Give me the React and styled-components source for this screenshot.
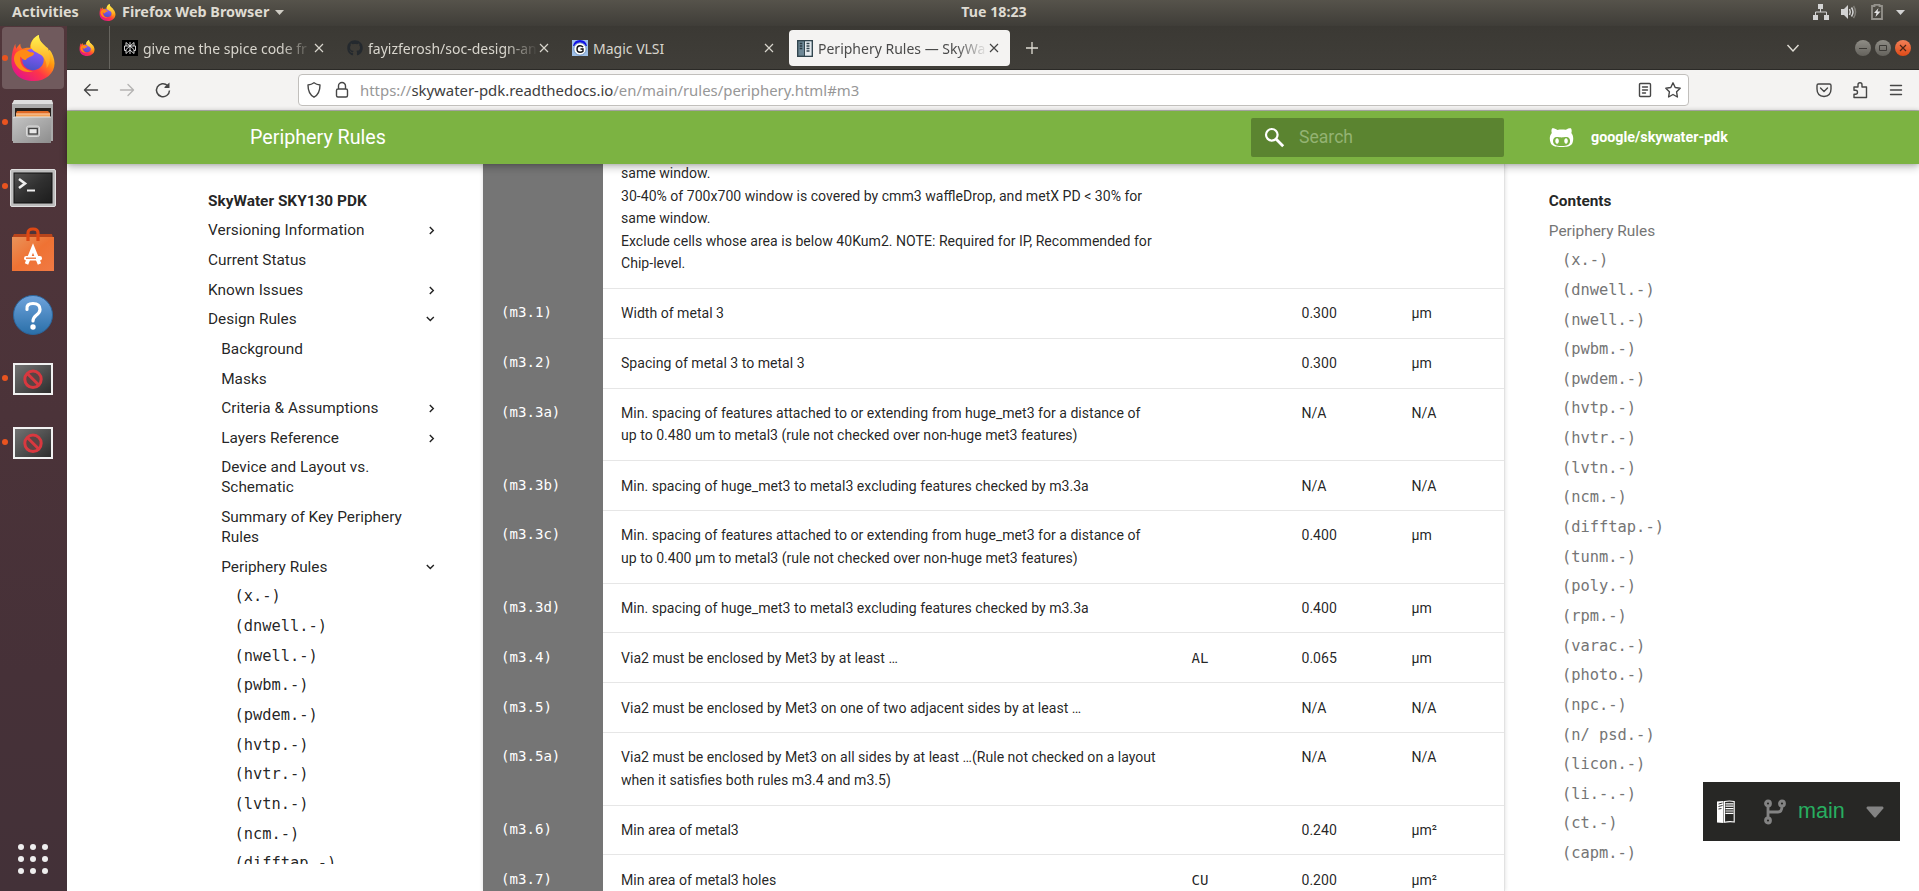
import React from 'react';
import styled, { createGlobalStyle, css } from 'styled-components';
import { FaGithub, FaGithubAlt } from 'react-icons/fa';

const UI = '"Noto Sans", "Open Sans", sans-serif';
const MONO = '"DejaVu Sans Mono", monospace';

const Global = createGlobalStyle`
  * { box-sizing: border-box; }
  body { margin: 0; overflow: hidden; background: #fff; font-family: Roboto, sans-serif; }
  svg { display: block; flex: none; }
`;

const Screen = styled.div`
  width: 1919px;
  height: 891px;
  display: flex;
  flex-direction: column;
  overflow: hidden;
`;

/* ---------- desktop top bar ---------- */
const TopBar = styled.div`
  flex: none;
  height: 26px;
  padding: 0 13px 2px 12px;
  display: grid;
  grid-template-columns: 1fr auto 1fr;
  align-items: center;
  background: linear-gradient(#56534b, #3f3d38);
  color: #dfdbd2;
  font: bold 14.4px/24px ${UI};
`;
const TopGroup = styled.div`
  display: flex;
  align-items: center;
  height: 24px;
  justify-content: ${(p) => (p.$end ? 'flex-end' : 'flex-start')};
`;
const Activities = styled.span`
  width: 87px;
`;
const AppName = styled.span`
  margin: 0 6px 0 6px;
`;
const Clock = styled.span`
  font-size: 14.2px;
  position: relative;
  left: 35px;
`;
const StatusGap = styled.span`
  width: ${(p) => p.$w}px;
`;

const Below = styled.div`
  flex: 1;
  min-height: 0;
  display: flex;
`;

/* ---------- dock ---------- */
const Dock = styled.div`
  flex: none;
  width: 67px;
  display: flex;
  flex-direction: column;
  background: linear-gradient(#51363b, #4b3339 45%, #463138 75%, #433138);
`;
const DockItem = styled.div`
  position: relative;
  height: 64px;
  padding-right: 1px;
  display: flex;
  align-items: center;
  justify-content: center;
`;
const DockTile = styled.div`
  width: 62px;
  height: 62px;
  display: flex;
  align-items: center;
  justify-content: center;
  padding-top: ${(p) => p.$drop || 0}px;
  border-radius: 4px;
  background: ${(p) => (p.$active ? '#705a5d' : 'transparent')};
`;
const RunDot = styled.i`
  position: absolute;
  left: 2px;
  top: 29px;
  width: 6px;
  height: 6px;
  border-radius: 50%;
  background: #e95420;
`;
const DockSpacer = styled.div`
  flex: 1;
`;
const AppGrid = styled.div`
  display: grid;
  grid-template-columns: repeat(3, 6px);
  gap: 6px;
  margin: 0 0 17px 18px;
  & > i {
    width: 6px;
    height: 6px;
    border-radius: 50%;
    background: #eee;
  }
`;

/* ---------- browser chrome ---------- */
const Browser = styled.div`
  flex: 1;
  min-width: 0;
  display: flex;
  flex-direction: column;
`;
const TabBar = styled.div`
  flex: none;
  height: 44px;
  display: flex;
  align-items: center;
  background: linear-gradient(#3b3934, #403e39);
  border-bottom: 1px solid #2b2a27;
  padding-right: 8px;
`;
const PinnedTab = styled.div`
  width: 43px;
  height: 43px;
  padding-left: 12px;
  display: flex;
  align-items: center;
  border-right: 1px solid #66645e;
  margin-right: 4px;
`;
const Tab = styled.div`
  width: 221px;
  height: 36px;
  margin: 1px 4px 0 0;
  padding: 0 10px 0 8px;
  display: flex;
  align-items: center;
  border-radius: 4px;
  font: 14px/20px ${UI};
  color: #d8d5cd;
  ${(p) => p.$active && css`
    background: #f4f3f2;
    color: #4a4a4a;
  `}
`;
const TabTitle = styled.span`
  flex: 1;
  min-width: 0;
  margin-left: 5px;
  padding-top: 1px;
  overflow: hidden;
  white-space: nowrap;
  ${(p) => p.$fade && css`
    mask-image: linear-gradient(to right, #000 calc(100% - 32px), transparent 100%);
  `}
`;
const TabControls = styled.div`
  flex: 1;
  display: flex;
  align-items: center;
  padding-left: 12px;
`;
const WinButtons = styled.div`
  display: flex;
  gap: 4px;
  margin-left: 55px;
`;
const WinButton = styled.div`
  width: 16px;
  height: 16px;
  border-radius: 50%;
  background: ${(p) => (p.$close ? 'linear-gradient(#f28058, #df4a16)' : 'linear-gradient(#8f8d86, #64625c)')};
`;
const Push = styled.div`
  flex: 1;
`;

const NavBar = styled.div`
  flex: none;
  height: 41px;
  display: flex;
  align-items: center;
  background: #f4f3f2;
  border-bottom: 1px solid #bab8b5;
  padding: 0 14px 0 15px;
`;
const NavButtons = styled.div`
  display: flex;
  gap: 18px;
  width: 216px;
`;
const UrlBox = styled.div`
  width: 1391px;
  height: 32px;
  display: flex;
  align-items: center;
  padding: 0 6px;
  border: 1px solid #c1bfbc;
  border-radius: 4px;
  background: #fff;
`;
const Url = styled.span`
  margin-left: 9px;
  padding-bottom: 1px;
  font: 14.92px/22px ${UI};
  color: #979797;
  & > b {
    font-weight: 400;
    color: #3d3d3d;
  }
`;
const NavIcons = styled.div`
  display: flex;
  gap: ${(p) => p.$gap}px;
  margin-left: auto;
`;

/* ---------- documentation page ---------- */
const Header = styled.header`
  flex: none;
  position: relative;
  z-index: 2;
  height: 53px;
  display: flex;
  align-items: center;
  padding-left: 183px;
  background: #7cb342;
  color: #fff;
  box-shadow: 0 0 5px rgba(0, 0, 0, 0.22), 0 4px 8px rgba(0, 0, 0, 0.2);
`;
const HeaderTitle = styled.div`
  width: 1001px;
  font-size: 19.7px;
  line-height: 26px;
`;
const SearchBox = styled.div`
  width: 253px;
  height: 39px;
  margin-bottom: 1px;
  padding-left: 13px;
  display: flex;
  align-items: center;
  gap: 14px;
  border-radius: 2px;
  background: #5b8430;
  color: #94b373;
  font-size: 17.6px;
`;
const RepoLink = styled.div`
  display: flex;
  align-items: center;
  gap: 17px;
  margin: 0 0 1px 45px;
  font-size: 14.3px;
  font-weight: 700;
`;

const Main = styled.main`
  flex: 1;
  min-height: 0;
  display: flex;
  background: #fff;
  color: rgba(0, 0, 0, 0.87);
`;
const Sidebar = styled.nav`
  flex: none;
  width: 416px;
  height: 700px;
  overflow: hidden;
  padding: 26.7px 47px 0 141px;
`;
const NavHeading = styled.div`
  height: 29.65px;
  line-height: 20px;
  font-size: 15.4px;
  font-weight: 700;
  white-space: nowrap;
`;
const NavItem = styled.div`
  display: flex;
  align-items: center;
  justify-content: space-between;
  margin-bottom: 9.65px;
  padding-left: ${(p) => p.$level * 13.2}px;
  white-space: pre;
  font-size: 15.4px;
  line-height: 20px;
  color: ${(p) => (p.$muted ? '#757575' : 'inherit')};
  ${(p) => p.$code && css`
    font-family: ${MONO};
    font-size: 15.4px;
  `}
`;
const Article = styled.section`
  flex: none;
  width: 1022px;
  overflow: hidden;
  border-right: 1px solid #e2e2e2;
  box-shadow: 0 0 4px rgba(0, 0, 0, 0.14);
`;
const Row = styled.div`
  display: grid;
  grid-template-columns: 120px 570.5px 110px 110px 1fr;
  height: ${(p) => p.$h}px;
  font-size: 14.08px;
  line-height: 22.5px;
`;
const Cell = styled.div`
  padding: 13.4px 0 0 18px;
  white-space: pre;
  border-bottom: 1px solid #e6e6e6;
`;
const CodeCell = styled.div`
  padding: 12.4px 0 0 18px;
  background: #757575;
  color: #fff;
  font-family: ${MONO};
  font-size: 14.08px;
`;
const FlagCell = styled(Cell)`
  font-family: ${MONO};
  font-size: 14.08px;
`;
const TailCell = styled(Cell)`
  display: flex;
  align-items: flex-end;
  padding-bottom: 13.4px;
  padding-top: 0;
  overflow: hidden;
`;
const Contents = styled.aside`
  flex: 1;
  padding: 27px 0 0 43.8px;
`;

const VersionBox = styled.div`
  position: fixed;
  left: 1703px;
  top: 782px;
  width: 197px;
  height: 59px;
  padding: 0 16px 0 14px;
  display: flex;
  align-items: center;
  background: #272725;
  color: #27ae60;
  font: 21.6px/30px "Liberation Sans", sans-serif;
`;
const Branch = styled.span`
  width: 68px;
  margin-left: 12px;
  padding-bottom: 2px;
`;

/* ---------- drawings ---------- */
function FirefoxLogo({ size }) {
  const id = 'ff' + size;
  return (
    <svg width={size} height={size} viewBox="0 0 46 47">
      <defs>
        <linearGradient id={id + 'a'} x1=".85" y1=".1" x2=".2" y2=".95">
          <stop offset="0" stopColor="#fff44f" />
          <stop offset=".35" stopColor="#ff980e" />
          <stop offset=".65" stopColor="#ff3647" />
          <stop offset="1" stopColor="#e31587" />
        </linearGradient>
        <linearGradient id={id + 'b'} x1=".6" y1="0" x2=".4" y2="1">
          <stop offset="0" stopColor="#9059ff" />
          <stop offset="1" stopColor="#4b52c8" />
        </linearGradient>
        <linearGradient id={id + 'c'} x1=".6" y1="0" x2=".6" y2="1">
          <stop offset="0" stopColor="#fff44f" />
          <stop offset="1" stopColor="#ff9a1e" />
        </linearGradient>
      </defs>
      <path d="M5 9c0 2 .2 3 1 5 1-2 2-3 4-5 0 3 1 4 2 5 3-1 6-1 8-1 0-6 4-11 9-13 0 6 3 8 7 12 2 1 3 2 3 4l1-1c3 4 5 9 5 14 0 10-9 18-21 18C10 47 1 39 1 27 1 19 3 13 5 9z" fill={`url(#${id}a)`} />
      <circle cx="23" cy="25" r="11" fill={`url(#${id}b)`} />
      <path d="M29 0c0 6 3 8 7 12 5 5 6 16 1 22 0-5-1-9-5-13-4-3-9-4-11-8-1-5 3-11 8-13z" fill={`url(#${id}c)`} />
      <path d="M7 17c5-3 9-2 12 0 2 1 5 0 5 2 0 3-6 3-8 6-2 2-5-2-6-3-1 7 4 15 13 15-9 3-17-3-19-10-1-4 0-8 3-10z" fill="#ff8a16" />
    </svg>
  );
}
const FilesIcon = () => (
  <svg width="44" height="46" viewBox="0 0 44 46">
    <defs>
      <linearGradient id="cab" x1="0" y1="0" x2="1" y2="1"><stop stopColor="#c4c4c4" /><stop offset="1" stopColor="#8d8d8d" /></linearGradient>
    </defs>
    <path d="M2 4l2-3h36l2 3v38H1V4z" fill="#aaa" />
    <path d="M3 1h38l1 4H1z" fill="#dedede" />
    <path d="M4 9h36v10H4z" fill="#26201c" />
    <path d="M5 14l1-2h31l2 2v5H5z" fill="#e06a26" />
    <path d="M5 15.500h34V19H5z" fill="#f3a156" />
    <path d="M5 15h34" stroke="#ffe0bd" />
    <path d="M2 19l2-1h36v26H2z" fill="url(#cab)" />
    <path d="M2 19l2-1h36" stroke="#e4e4e4" fill="none" />
    <rect x="15.500" y="27" width="13" height="10.500" rx="2" fill="#bcbcbc" stroke="#dadada" />
    <rect x="17.800" y="29.500" width="8.500" height="5.500" fill="#e8e8e8" stroke="#444" strokeWidth="1.300" />
  </svg>
);
const TerminalIcon = () => (
  <svg width="46" height="38" viewBox="0 0 46 38">
    <defs><linearGradient id="trm" x1="0" y1="0" x2="1" y2="1"><stop stopColor="#525252" /><stop offset=".5" stopColor="#303030" /><stop offset="1" stopColor="#1c1c1c" /></linearGradient></defs>
    <rect x=".5" y=".5" width="45" height="37" rx="1.500" fill="#bdbdbd" stroke="#e0e0e0" />
    <rect x="4" y="4" width="38" height="30" fill="url(#trm)" stroke="#111" />
    <path d="M9 10l6 4.500-6 4.500" fill="none" stroke="#eee" strokeWidth="2.600" />
    <path d="M17 21.500h8" stroke="#eee" strokeWidth="2" />
  </svg>
);
const SoftwareIcon = () => (
  <svg width="44" height="46" viewBox="0 0 44 46">
    <defs><linearGradient id="bag" x1="0" y1="0" x2="1" y2="1"><stop stopColor="#e9935a" /><stop offset=".5" stopColor="#ef7233" /><stop offset="1" stopColor="#f07a45" /></linearGradient></defs>
    <path d="M3 7h38l1 4H1z" fill="#b8451c" />
    <path d="M1 10h42v34H1z" fill="url(#bag)" />
    <path d="M17 14V6q0-4 5-4t5 4v8" fill="none" stroke="#dd4814" strokeWidth="3.200" />
    <path d="M15.500 37L22 21l6.500 16" fill="none" stroke="#fff" strokeWidth="3.600" />
    <rect x="13" y="29" width="18" height="4.500" rx="2.200" fill="#fff" />
    <path d="M15 31.200h10" stroke="#ef7233" strokeWidth="1.300" />
  </svg>
);
const HelpIcon = () => (
  <svg width="42" height="42" viewBox="0 0 42 42">
    <defs><linearGradient id="hlp" x1="0" y1="0" x2="0" y2="1"><stop stopColor="#6ea3dc" /><stop offset="1" stopColor="#2a6fa8" /></linearGradient></defs>
    <circle cx="21" cy="21" r="19.500" fill="url(#hlp)" stroke="#2b659c" />
    <path d="M15 15.500q-1-6 6-6 7 0 7 6 0 3-4 6-3 2.500-3 5.500" fill="none" stroke="#fff" strokeWidth="3.200" strokeLinecap="round" />
    <circle cx="21" cy="33" r="2.700" fill="#fff" />
  </svg>
);
const BlockedIcon = () => (
  <svg width="40" height="32" viewBox="0 0 40 32">
    <defs><linearGradient id="blk" x1="0" y1="0" x2="1" y2="1"><stop stopColor="#747474" /><stop offset="1" stopColor="#2b2b2b" /></linearGradient></defs>
    <rect x="1" y="1" width="38" height="30" fill="url(#blk)" stroke="#f1f1f1" strokeWidth="2" />
    <circle cx="20" cy="16.300" r="8.200" fill="#5a4444" stroke="#d8383f" strokeWidth="3" />
    <path d="M14.500 10.800l11 11" stroke="#d8383f" strokeWidth="3" />
  </svg>
);
const Close = ({ color }) => (
  <svg width="12" height="12" viewBox="0 0 12 12"><path d="M2 2l8 8M10 2l-8 8" stroke={color} strokeWidth="1.200" /></svg>
);
const AsteriskIcon = () => (
  <svg width="16" height="16" viewBox="0 0 16 16">
    <rect width="16" height="16" fill="#000" />
    <path d="M8 2v12M4 2.500L8 6l4-3.500V6M4 2.500V6M2.500 6h11v4.500H12M2.500 6v4.500H4M8 6L4 9.500v4L8 10l4 3.500v-4L8 6" fill="none" stroke="#e8e8e8" strokeWidth=".9" />
  </svg>
);
const MagicIcon = () => (
  <svg width="16" height="16" viewBox="0 0 16 16">
    <rect width="16" height="16" fill="#9fc0e8" />
    <path d="M1 6Q2 0 8 0t7 6z" fill="#1111e8" />
    <circle cx="8" cy="9" r="6.200" fill="#fff" stroke="#6a8fbe" />
    <path d="M11 7.200Q10 5.800 8 5.800q-3 0-3 3.200t3 3.200q2 0 3-1V9H8.500" fill="none" stroke="#111" strokeWidth="1.400" />
  </svg>
);
const DocsIcon = () => (
  <svg width="16" height="17" viewBox="0 0 16 17">
    <rect x=".7" y=".7" width="14.600" height="15.600" fill="#6d8795" stroke="#33464f" strokeWidth="1.400" />
    <rect x="7.500" y="1.400" width="7" height="14.200" fill="#e4eaee" />
    <path d="M7.500 1v15" stroke="#33464f" strokeWidth="1" />
    <path d="M2.700 3.500h2.600M2.700 6h2.600M2.700 8.500h2.600" stroke="#2a3b44" strokeWidth="1.300" />
    <path d="M9.500 3.500h3M9.500 6h3M9.500 8.500h3M9.500 11h3" stroke="#33464f" strokeWidth="1.300" />
  </svg>
);
const Line = ({ d, size = 18, color = '#464646', w = 1.4 }) => (
  <svg width={size} height={size} viewBox="0 0 18 18" fill="none" stroke={color} strokeWidth={w} strokeLinecap="round" strokeLinejoin="round"><path d={d} /></svg>
);
const Chevron = ({ open }) => (
  <svg width="10" height="10" viewBox="0 0 10 10" fill="none" stroke="#222" strokeWidth="1.400">
    <path d={open ? 'M.8 3l3.500 3.500L7.800 3' : 'M3.800 2l3.500 3.500L3.800 9'} />
  </svg>
);

/* ---------- data ---------- */
const rules = ['(x.-)', '(dnwell.-)', '(nwell.-)', '(pwbm.-)', '(pwdem.-)', '(hvtp.-)', '(hvtr.-)', '(lvtn.-)', '(ncm.-)', '(difftap.-)', '(tunm.-)', '(poly.-)', '(rpm.-)', '(varac.-)', '(photo.-)', '(npc.-)', '(n/ psd.-)', '(licon.-)', '(li.-.-)', '(ct.-)', '(capm.-)'];
const nav = [
  [0, 'Versioning Information', 'closed'],
  [0, 'Current Status'],
  [0, 'Known Issues', 'closed'],
  [0, 'Design Rules', 'open'],
  [1, 'Background'],
  [1, 'Masks'],
  [1, 'Criteria & Assumptions', 'closed'],
  [1, 'Layers Reference', 'closed'],
  [1, 'Device and Layout vs.\nSchematic'],
  [1, 'Summary of Key Periphery\nRules'],
  [1, 'Periphery Rules', 'open'],
];
const table = [
  ['(m3.1)', 'Width of metal 3', '', '0.300', 'µm'],
  ['(m3.2)', 'Spacing of metal 3 to metal 3', '', '0.300', 'µm'],
  ['(m3.3a)', 'Min. spacing of features attached to or extending from huge_met3 for a distance of\nup to 0.480 um to metal3 (rule not checked over non-huge met3 features)', '', 'N/A', 'N/A'],
  ['(m3.3b)', 'Min. spacing of huge_met3 to metal3 excluding features checked by m3.3a', '', 'N/A', 'N/A'],
  ['(m3.3c)', 'Min. spacing of features attached to or extending from huge_met3 for a distance of\nup to 0.400 µm to metal3 (rule not checked over non-huge met3 features)', '', '0.400', 'µm'],
  ['(m3.3d)', 'Min. spacing of huge_met3 to metal3 excluding features checked by m3.3a', '', '0.400', 'µm'],
  ['(m3.4)', 'Via2 must be enclosed by Met3 by at least …', 'AL', '0.065', 'µm'],
  ['(m3.5)', 'Via2 must be enclosed by Met3 on one of two adjacent sides by at least …', '', 'N/A', 'N/A'],
  ['(m3.5a)', 'Via2 must be enclosed by Met3 on all sides by at least …(Rule not checked on a layout\nwhen it satisfies both rules m3.4 and m3.5)', '', 'N/A', 'N/A'],
  ['(m3.6)', 'Min area of metal3', '', '0.240', 'µm²'],
  ['(m3.7)', 'Min area of metal3 holes', 'CU', '0.200', 'µm²'],
];
const tail = 'same window.\n30-40% of 700x700 window is covered by cmm3 waffleDrop, and metX PD < 30% for\nsame window.\nExclude cells whose area is below 40Kum2. NOTE: Required for IP, Recommended for\nChip-level.';
const dock = [
  [<FirefoxLogo size={46} />, true, true],
  [<FilesIcon />, true],
  [<TerminalIcon />, true, false, 4],
  [<SoftwareIcon />, false],
  [<HelpIcon />, false, false, 2],
  [<BlockedIcon />, true, false, 2],
  [<BlockedIcon />, true, false, 2],
];
const tabs = [
  [<AsteriskIcon />, 'give me the spice code fr', true],
  [<FaGithub size={16} color="#24292e" />, 'fayizferosh/soc-design-an', true],
  [<MagicIcon />, 'Magic VLSI', false],
  [<DocsIcon />, 'Periphery Rules — SkyWa', true, true],
];

export default function App() {
  return (
    <Screen>
      <Global />
      <TopBar>
        <TopGroup>
          <Activities>Activities</Activities>
          <FirefoxLogo size={17} />
          <AppName>Firefox Web Browser</AppName>
          <svg width="9" height="5" viewBox="0 0 9 5"><path d="M0 0h9L4.500 5z" fill="#cfccc4" /></svg>
        </TopGroup>
        <Clock>Tue 18:23</Clock>
        <TopGroup $end>
          <svg width="16" height="16" viewBox="0 0 16 16" fill="#d3d3d3">
            <path d="M5 0h5v5H5zM0 11h5v5H0zM11 11h5v5h-5z" /><path d="M7.500 5v3M2.500 11V8h11v3" fill="none" stroke="#d3d3d3" />
          </svg>
          <StatusGap $w={12} />
          <svg width="16" height="14" viewBox="0 0 16 14" fill="none" strokeWidth="1.500">
            <path d="M0 4h3l4-4v14l-4-4H0z" fill="#d3d3d3" /><path d="M8.500 4q1.500 3 0 6M10.500 2.500q3 4.500 0 9" stroke="#d3d3d3" /><path d="M12.500 1q4 6 0 12" stroke="#807e78" />
          </svg>
          <StatusGap $w={14} />
          <svg width="12" height="16" viewBox="0 0 12 16"><path d="M1 2h2.500V.8h5V2H11v13H1z" fill="none" stroke="#94928c" strokeWidth="1.800" /><path d="M7.500 4L3 9h2.500L4.500 13 9.500 7.500H6.500z" fill="#e4e4e4" /></svg>
          <StatusGap $w={13} />
          <svg width="9" height="5" viewBox="0 0 9 5"><path d="M0 0h9L4.500 5z" fill="#d3d3d3" /></svg>
          <StatusGap $w={1} />
        </TopGroup>
      </TopBar>
      <Below>
        <Dock>
          {dock.map(([icon, running, active, drop], i) => (
            <DockItem key={i}>
              {running && <RunDot />}
              <DockTile $active={active} $drop={drop}>{icon}</DockTile>
            </DockItem>
          ))}
          <DockSpacer />
          <AppGrid>{Array.from({ length: 9 }, (_, i) => <i key={i} />)}</AppGrid>
        </Dock>
        <Browser>
          <TabBar>
            <PinnedTab><FirefoxLogo size={16} /></PinnedTab>
            {tabs.map(([icon, title, fade, active]) => (
              <Tab key={title} $active={active}>
                {icon}
                <TabTitle $fade={fade}>{title}</TabTitle>
                <Close color={active ? '#444' : '#d8d5cd'} />
              </Tab>
            ))}
            <TabControls>
              <svg width="12" height="12" viewBox="0 0 12 12"><path d="M6 0v12M0 6h12" stroke="#e0ddd5" strokeWidth="1.300" /></svg>
              <Push />
              <svg width="14" height="8" viewBox="0 0 14 8"><path d="M1.500 1L7 7l5.500-6" fill="none" stroke="#e0ddd5" strokeWidth="1.400" /></svg>
              <WinButtons>
                <WinButton><svg width="16" height="16"><path d="M4 8.500h8" stroke="#3c3a36" /></svg></WinButton>
                <WinButton><svg width="16" height="16"><path d="M4.500 5.500h7v5h-7z" fill="none" stroke="#3c3a36" /></svg></WinButton>
                <WinButton $close><svg width="16" height="16"><path d="M5 5l6 6M11 5l-6 6" stroke="#4a2416" strokeWidth="1.200" /></svg></WinButton>
              </WinButtons>
            </TabControls>
          </TabBar>
          <NavBar>
            <NavButtons>
              <Line d="M15.500 9H3M8 3.500L2.500 9 8 14.500" />
              <Line d="M2.500 9H15M10 3.500L15.500 9 10 14.500" color="#b5b4b3" />
              <svg width="18" height="18" viewBox="0 0 18 18"><path d="M13.500 4.500A6.500 6.500 0 1 0 15.500 9.500" fill="none" stroke="#464646" strokeWidth="1.500" /><path d="M10.500 7V6l5-4.500V7z" fill="#464646" /></svg>
            </NavButtons>
            <UrlBox>
              <Line d="M9 1.800c2 1.500 4 2 6 2.200 0 5-1 9.500-6 12.200C4 13.500 3 9 3 4c2-.2 4-.7 6-2.200z" />
              <StatusGap $w={10} />
              <Line d="M5 8h8q1.500 0 1.500 1.500v5q0 1.500-1.500 1.500H5q-1.500 0-1.500-1.500v-5Q3.500 8 5 8zM5.500 8V5a3.500 3.500 0 0 1 7 0v3" />
              <Url>https://<b>skywater-pdk.readthedocs.io</b>/en/main/rules/periphery.html#m3</Url>
              <NavIcons $gap={10}>
                <Line d="M4.500 2.500h9q1 0 1 1v11q0 1-1 1h-9q-1 0-1-1v-11q0-1 1-1zM6.500 6h5M6.500 9h5M6.500 12h3" />
                <Line d="M9 1.800l2.200 4.700 5 .7-3.600 3.600.8 5.200L9 13.500 4.600 16l.8-5.200L1.800 7.200l5-.7z" />
              </NavIcons>
            </UrlBox>
            <NavIcons $gap={18}>
              <Line d="M3.500 3h11q1.500 0 1.500 1.500V8q0 7-7 7.500Q2 15 2 8V4.500Q2 3 3.500 3zM5.500 7L9 10.500 12.500 7" />
              <Line d="M3 6h4V3.800a2 2 0 0 1 4 0V6h4.500v10.500H3v-3.200h1.500a2 2 0 0 0 0-4H3z" />
              <Line d="M3.500 4.500h11M3.500 9h11M3.500 13.500h11" />
            </NavIcons>
          </NavBar>
          <Header>
            <HeaderTitle>Periphery Rules</HeaderTitle>
            <SearchBox>
              <svg width="21" height="21" viewBox="0 0 21 21" fill="none" stroke="#fff" strokeWidth="2.200"><circle cx="7.800" cy="7.800" r="5.800" /><path d="M12 12l7.200 7.200" strokeWidth="2.800" /></svg>
              Search
            </SearchBox>
            <RepoLink><FaGithubAlt size={25} />google/skywater-pdk</RepoLink>
          </Header>
          <Main>
            <Sidebar>
              <NavHeading>SkyWater SKY130 PDK</NavHeading>
              {nav.map(([level, label, state]) => (
                <NavItem key={label} $level={level}>{label}{state && <Chevron open={state === 'open'} />}</NavItem>
              ))}
              {rules.slice(0, 10).map((r) => <NavItem key={r} $level={2} $code>{r}</NavItem>)}
            </Sidebar>
            <Article>
              <Row $h={125}>
                <CodeCell /><TailCell>{tail}</TailCell><Cell /><Cell /><Cell />
              </Row>
              {table.map(([code, text, flag, value, unit]) => (
                <Row key={code} $h={text.includes('\n') ? 72.6 : 49.8}>
                  <CodeCell>{code}</CodeCell>
                  <Cell>{text}</Cell>
                  <FlagCell>{flag}</FlagCell>
                  <Cell>{value}</Cell>
                  <Cell>{unit}</Cell>
                </Row>
              ))}
            </Article>
            <Contents>
              <NavHeading>Contents</NavHeading>
              <NavItem $level={0} $muted>Periphery Rules</NavItem>
              {rules.map((r) => <NavItem key={r} $level={1} $code $muted>{r}</NavItem>)}
            </Contents>
          </Main>
        </Browser>
      </Below>
      <VersionBox>
        <svg width="18" height="24" viewBox="0 0 18 24">
          <path d="M0 1.500L6.500 1v22L0 22.500z" fill="#fff" />
          <path d="M7.500 1.500q5-1 9.700 0v20.500q-5-.8-9.700.3z" fill="none" stroke="#fff" strokeWidth="1.100" />
          <path d="M1.500 4l4-1M1.500 6.500l4-1M1.500 9l3-.500" stroke="#333" />
          <path d="M8.500 3.800h8M8.500 6.200h8M8.500 8.600h8M8.500 11h8M8.500 13.400h8" stroke="#fff" strokeWidth="1.200" />
        </svg>
        <StatusGap $w={29} />
        <svg width="22" height="26" viewBox="0 0 22 26" fill="none" stroke="#838383" strokeWidth="2.800">
          <circle cx="4" cy="4.500" r="2.500" /><circle cx="18" cy="4.500" r="2.500" /><circle cx="4" cy="21.500" r="2.500" /><path d="M4 7v12M4 13h10q4 0 4-6" />
        </svg>
        <Branch>main</Branch>
        <svg width="18" height="12" viewBox="0 0 18 12"><path d="M1.500.5h15q1.500.5.8 2L10 11q-1 1-2 0L.7 2.500Q0 1 1.500.5z" fill="#838383" /></svg>
      </VersionBox>
    </Screen>
  );
}
